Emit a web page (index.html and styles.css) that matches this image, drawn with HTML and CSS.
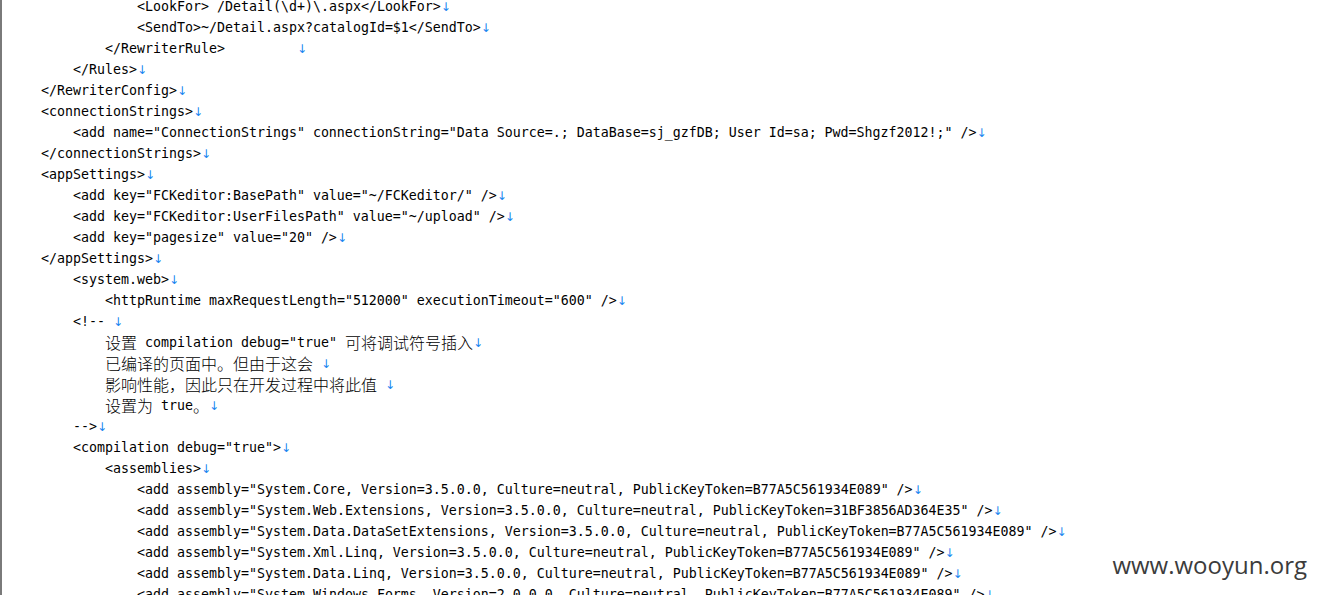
FILE: index.html
```html
<!DOCTYPE html>
<html lang="zh-CN">
<head>
    <meta charset="UTF-8">
    <title>web.config</title>
    <link rel="stylesheet" href="styles.css">
</head>
<body>
    <div class="editor">
        <div class="code">
            <div class="ln i3">&lt;LookFor&gt; /Detail(\d+)\.aspx&lt;/LookFor&gt;<span class="lf">↓</span></div>
            <div class="ln i3">&lt;SendTo&gt;~/Detail.aspx?catalogId=$1&lt;/SendTo&gt;<span class="lf">↓</span></div>
            <div class="ln i2">&lt;/RewriterRule&gt;         <span class="lf">↓</span></div>
            <div class="ln i1">&lt;/Rules&gt;<span class="lf">↓</span></div>
            <div class="ln">&lt;/RewriterConfig&gt;<span class="lf">↓</span></div>
            <div class="ln">&lt;connectionStrings&gt;<span class="lf">↓</span></div>
            <div class="ln i1">&lt;add name="ConnectionStrings" connectionString="Data Source=.; DataBase=sj_gzfDB; User Id=sa; Pwd=Shgzf2012!;" /&gt;<span class="lf">↓</span></div>
            <div class="ln">&lt;/connectionStrings&gt;<span class="lf">↓</span></div>
            <div class="ln">&lt;appSettings&gt;<span class="lf">↓</span></div>
            <div class="ln i1">&lt;add key="FCKeditor:BasePath" value="~/FCKeditor/" /&gt;<span class="lf">↓</span></div>
            <div class="ln i1">&lt;add key="FCKeditor:UserFilesPath" value="~/upload" /&gt;<span class="lf">↓</span></div>
            <div class="ln i1">&lt;add key="pagesize" value="20" /&gt;<span class="lf">↓</span></div>
            <div class="ln">&lt;/appSettings&gt;<span class="lf">↓</span></div>
            <div class="ln i1">&lt;system.web&gt;<span class="lf">↓</span></div>
            <div class="ln i2">&lt;httpRuntime maxRequestLength="512000" executionTimeout="600" /&gt;<span class="lf">↓</span></div>
            <div class="ln i1">&lt;!-- <span class="lf">↓</span></div>
            <div class="ln i2"><span class="cjk">设置</span> compilation debug="true" <span class="cjk">可将调试符号插入</span><span class="lf">↓</span></div>
            <div class="ln i2"><span class="cjk">已编译的页面中。但由于这会</span> <span class="lf">↓</span></div>
            <div class="ln i2"><span class="cjk">影响性能，因此只在开发过程中将此值</span> <span class="lf">↓</span></div>
            <div class="ln i2"><span class="cjk">设置为</span> true<span class="cjk">。</span><span class="lf">↓</span></div>
            <div class="ln i1">--&gt;<span class="lf">↓</span></div>
            <div class="ln i1">&lt;compilation debug="true"&gt;<span class="lf">↓</span></div>
            <div class="ln i2">&lt;assemblies&gt;<span class="lf">↓</span></div>
            <div class="ln i3">&lt;add assembly="System.Core, Version=3.5.0.0, Culture=neutral, PublicKeyToken=B77A5C561934E089" /&gt;<span class="lf">↓</span></div>
            <div class="ln i3">&lt;add assembly="System.Web.Extensions, Version=3.5.0.0, Culture=neutral, PublicKeyToken=31BF3856AD364E35" /&gt;<span class="lf">↓</span></div>
            <div class="ln i3">&lt;add assembly="System.Data.DataSetExtensions, Version=3.5.0.0, Culture=neutral, PublicKeyToken=B77A5C561934E089" /&gt;<span class="lf">↓</span></div>
            <div class="ln i3">&lt;add assembly="System.Xml.Linq, Version=3.5.0.0, Culture=neutral, PublicKeyToken=B77A5C561934E089" /&gt;<span class="lf">↓</span></div>
            <div class="ln i3">&lt;add assembly="System.Data.Linq, Version=3.5.0.0, Culture=neutral, PublicKeyToken=B77A5C561934E089" /&gt;<span class="lf">↓</span></div>
            <div class="ln i3">&lt;add assembly="System.Windows.Forms, Version=2.0.0.0, Culture=neutral, PublicKeyToken=B77A5C561934E089" /&gt;<span class="lf">↓</span></div>
        </div>
    </div>

    <div class="watermark">www.wooyun.org</div>
</body>
</html>
```

FILE: styles.css
```css
* {
    box-sizing: border-box;
}

html, body {
    height: 100%;
}

body {
    margin: 0;
    background: #fff;
    color: #000;
    overflow: hidden;
    position: relative;
}

.editor {
    height: 100%;
    border-left: 2px solid #7a7a7a;
    overflow: hidden;
}

.code {
    margin-top: -4px;
    padding-left: 39px;
    font-family: "DejaVu Sans Mono", "Liberation Mono", monospace;
    font-size: 13.29px;
    line-height: 21px;
}

.ln {
    white-space: pre;
    height: 21px;
}

.i1 { padding-left: 32px; }
.i2 { padding-left: 64px; }
.i3 { padding-left: 96px; }

.cjk {
    display: inline-block;
    vertical-align: top;
    height: 21px;
    font-family: "Noto Sans CJK SC", sans-serif;
    font-size: 16px;
    line-height: 20px;
    font-weight: 300;
}

.lf {
    color: #1a86f0;
    display: inline-block;
    width: 8px;
    text-align: center;
    font-family: "DejaVu Sans", sans-serif;
    font-size: 12px;
}

.watermark {
    position: absolute;
    right: 10px;
    bottom: 14px;
    font-family: "Open Sans", sans-serif;
    font-size: 24px;
    color: #3c3c3c;
}
```
